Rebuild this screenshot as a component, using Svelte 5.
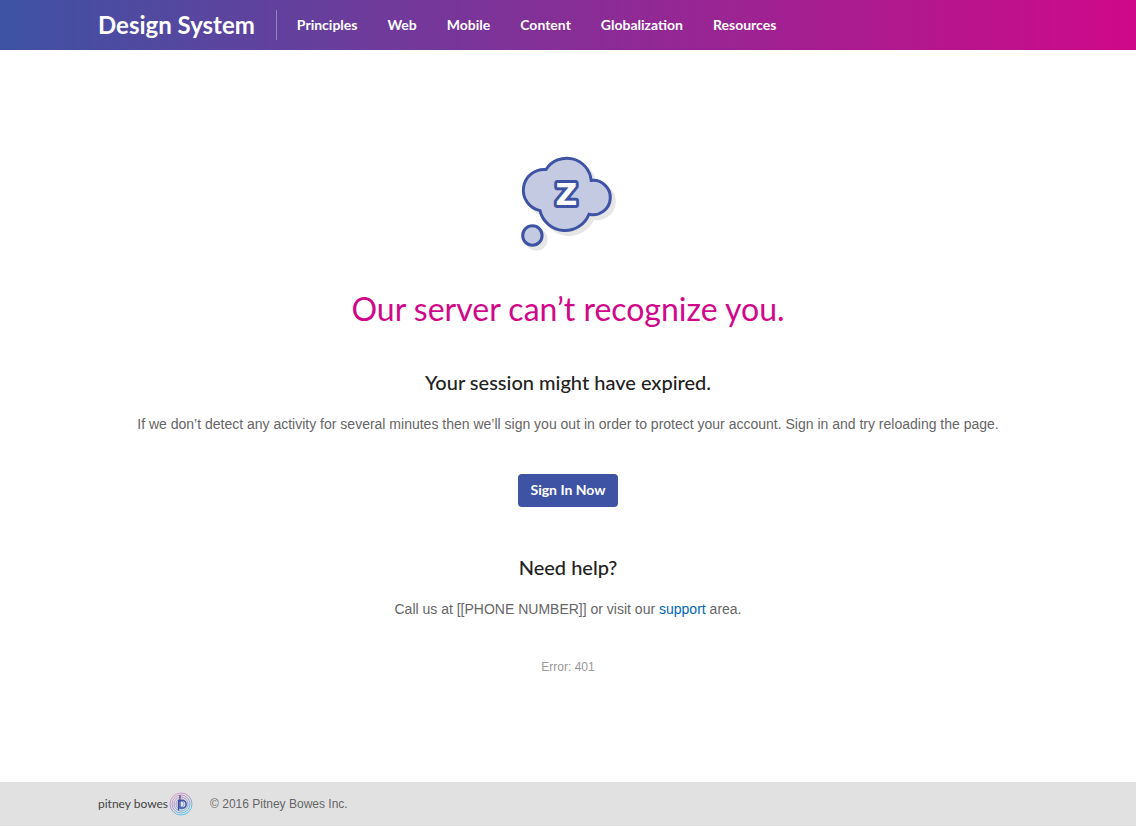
<script>
  const links = ['Principles', 'Web', 'Mobile', 'Content', 'Globalization', 'Resources'];
  const rings = [3, 5, 7, 9, 11];
</script>

<div class="page">
  <header>
    <a class="brand" href="#home">Design System</a>
    <nav aria-label="Main">
      {#each links as link}
        <a href={'#' + link.toLowerCase()}>{link}</a>
      {/each}
    </nav>
  </header>

  <main>
    <svg class="cloud" width="100" height="100" viewBox="8 10 100 100" aria-hidden="true">
      <defs>
        <g id="bubble">
          <path d="M36 24.500A24.600 24.600 0 0 1 81.200 35.400A17.200 17.200 0 1 1 79 69.200A25.700 25.700 0 0 1 30 65.600A20.800 20.800 0 0 1 36 24.500Z" />
          <circle cx="22.4" cy="90.5" r="9.7" />
        </g>
      </defs>
      <use href="#bubble" x="4" y="4" fill="#e6e6e6" stroke="#e6e6e6" stroke-width="3" />
      <use href="#bubble" fill="#c5cae3" stroke="#3e53a4" stroke-width="3" />
      <text x="56.4" y="60" text-anchor="middle">Z</text>
    </svg>

    <h1>Our server can’t recognize you.</h1>
    <h2>Your session might have expired.</h2>
    <p>If we don’t detect any activity for several minutes then we’ll sign you out in order to protect your account. Sign in and try reloading the page.</p>
    <button type="button">Sign In Now</button>
    <h2>Need help?</h2>
    <p>Call us at [[PHONE NUMBER]] or visit our <a href="#support">support</a> area.</p>
    <small>Error: 401</small>
  </main>

  <footer>
    <span class="logo">
      <span>pitney bowes</span>
      <svg width="24" height="24" viewBox="0 0 24 24" aria-hidden="true">
        <defs>
          <linearGradient id="tint" gradientUnits="userSpaceOnUse" x1="5" y1="3" x2="17" y2="22">
            <stop offset="0" stop-color="#dc8fbe" />
            <stop offset=".45" stop-color="#a08fcb" />
            <stop offset="1" stop-color="#3fc3f2" />
          </linearGradient>
        </defs>
        {#each rings as r}
          <circle cx="12" cy="12" {r} fill="none" stroke="url(#tint)" stroke-width="0.9" />
        {/each}
        <path d="M9.500 18.500V8.500H14A3.800 3.800 0 0 1 14 16H11V3" fill="none" stroke="#3e53a4" stroke-width="1.300" />
      </svg>
    </span>
    <span>© 2016 Pitney Bowes Inc.</span>
  </footer>
</div>

<style>
  :global(body) {
    margin: 0;
    background: #fff;
  }

  .page {
    display: flex;
    flex-direction: column;
    min-height: 100vh;
    color: #666;
    font: 14px/20px "Liberation Sans", Arial, sans-serif;
  }

  header {
    display: flex;
    align-items: center;
    height: 50px;
    padding: 0 98px;
    background: linear-gradient(90deg, #3e53a4, #cf0989);
    font-family: Lato, sans-serif;
  }

  header a {
    color: #fff;
    font-size: 14px;
    font-weight: 700;
    text-decoration: none;
  }

  header .brand {
    padding-right: 21px;
    border-right: 1px solid rgba(255, 255, 255, 0.35);
    font-size: 24px;
    line-height: 30px;
    white-space: nowrap;
  }

  nav {
    display: flex;
    gap: 30px;
    padding-left: 20px;
  }

  main {
    display: flex;
    flex: 1;
    flex-direction: column;
    align-items: center;
    padding: 105px 20px 0;
    text-align: center;
  }

  .cloud text {
    fill: #fff;
    stroke: #3e53a4;
    stroke-width: 6px;
    stroke-linejoin: round;
    paint-order: stroke;
    font: 700 30px "DejaVu Sans", sans-serif;
  }

  h1,
  h2 {
    margin: 0;
    font-family: Lato, sans-serif;
  }

  h1 {
    margin: 34px 0 38px;
    color: #cf0989;
    font-size: 32px;
    font-weight: 400;
    line-height: 40px;
  }

  h2 {
    margin-bottom: 17px;
    color: #222;
    font-size: 20px;
    font-weight: 500;
    line-height: 30px;
  }

  p {
    margin: 0;
  }

  p a {
    color: #0067b9;
    text-decoration: none;
  }

  button {
    margin: 40px 0 45px;
    padding: 5px 13px 7px;
    border: 0;
    border-radius: 4px;
    background: #3e53a4;
    color: #fff;
    font: 700 14px/21px Lato, sans-serif;
  }

  small {
    margin-top: 38px;
    color: #999;
    font-size: 12px;
  }

  footer {
    display: flex;
    align-items: center;
    gap: 17px;
    height: 44px;
    padding: 0 98px;
    border-bottom: 1px solid #fff;
    background: #e1e1e1;
    font-size: 12px;
  }

  .logo {
    display: flex;
    align-items: center;
    gap: 1px;
    color: #444;
    font-family: Lato, sans-serif;
  }
</style>
